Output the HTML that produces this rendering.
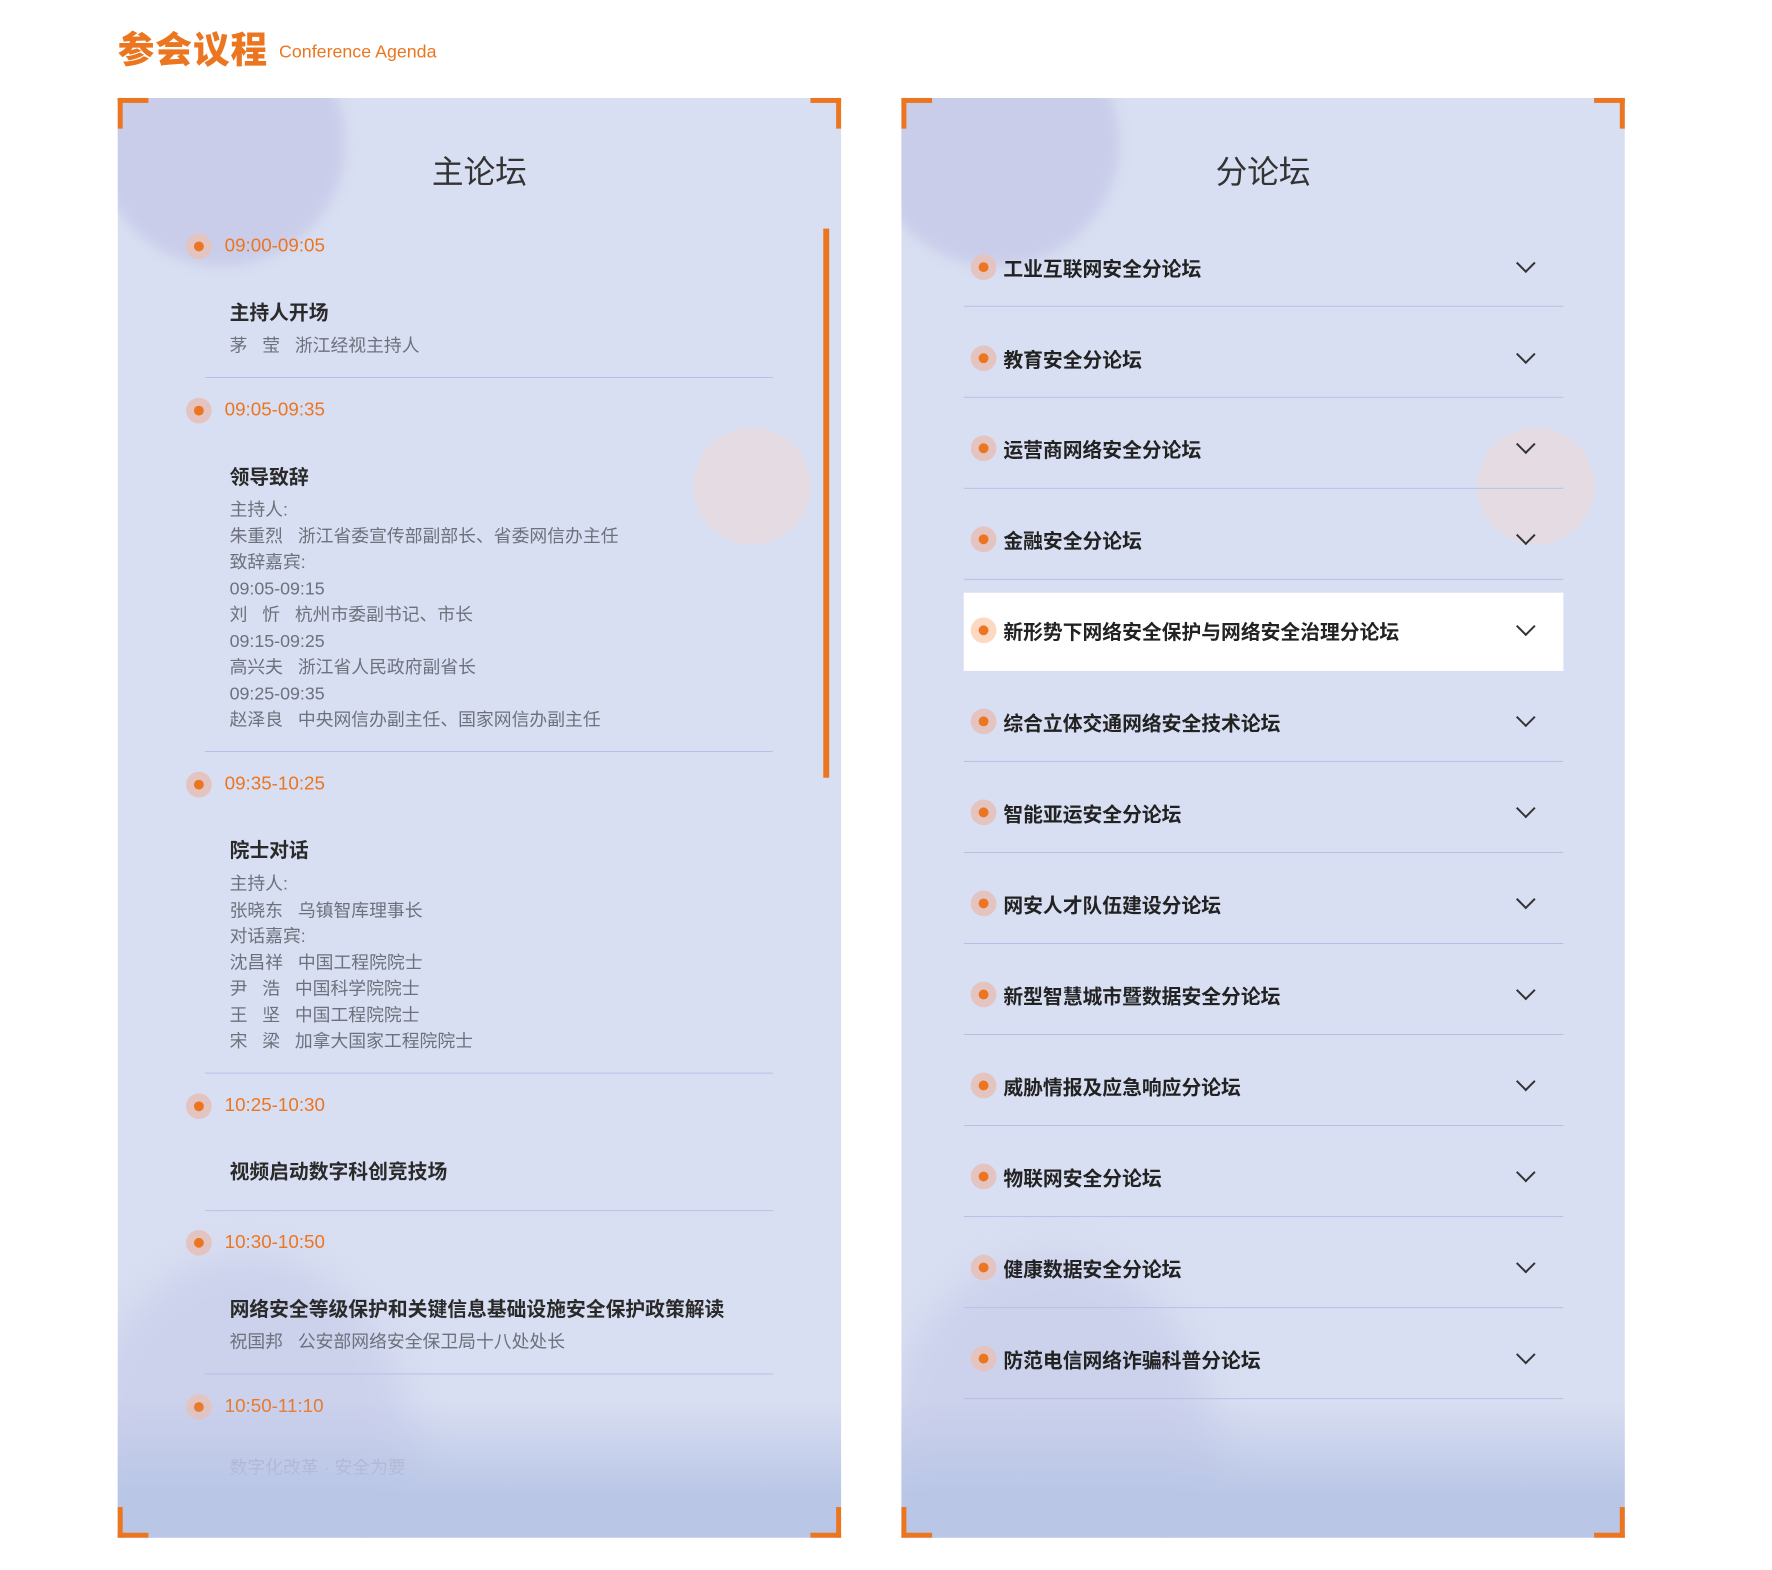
<!DOCTYPE html>
<html><head><meta charset="utf-8"><style>
*{margin:0;padding:0;box-sizing:border-box}
html{overflow:hidden;width:1772px;height:1570px}
body{width:1772px;height:1570px;background:#fff;position:relative;overflow:hidden;font-family:"Liberation Sans","Noto Sans CJK SC",sans-serif}
#w{position:absolute;left:0;top:0;width:1772px;height:1570px;transform:scale(0.9895);transform-origin:0 0}
.a{position:absolute;white-space:nowrap}
.h1{left:119px;top:20px;font-size:37px;font-weight:900;color:#ec7520;letter-spacing:1px}
.en{left:282px;top:42px;font-size:18px;color:#ec7520}
.panel{position:absolute;top:99px;width:731px;height:1455px;background:#d9dff2;overflow:hidden}
.c{position:absolute;width:31px;height:31px;border-color:#ec7520;border-style:solid;border-width:0}
.ttl{font-size:32px;color:#333;width:100%;text-align:center;top:50px}
.dot{position:absolute;width:26px;height:26px;border-radius:50%;background:#e4c4c0}
.dot::after{content:"";position:absolute;left:8px;top:8px;width:10px;height:10px;border-radius:50%;background:#ec7520}
.tm{font-size:19px;color:#ec7520}
.it{font-size:20px;font-weight:bold;color:#2a2a2a}
.ds{font-size:18px;color:#6d717c;line-height:26.5px}
.sep{position:absolute;height:1px;background:#b4c1e6}
.rt{font-size:20px;font-weight:bold;color:#222}
.chev{position:absolute;width:14px;height:14px;border-right:2px solid #333;border-bottom:2px solid #333;transform:rotate(45deg)}
</style></head><body><div id="w">
<div class="a h1">参会议程</div>
<div class="a en">Conference Agenda</div>

<div class="panel" style="left:119px">
 <div class="a" style="left:-20px;top:-80px;width:250px;height:250px;border-radius:50%;background:#c9cdea;filter:blur(6px)"></div>
 <div class="a" style="left:582px;top:333px;width:118px;height:118px;border-radius:50%;background:#e5dbe3"></div>
 <div class="a" style="left:-40px;top:1170px;width:340px;height:420px;border-radius:50%;background:#ccd1ec;filter:blur(20px)"></div>
 <div class="a ttl">主论坛</div>
 <div class="a" style="left:713px;top:132px;width:6px;height:555px;background:#ec7520"></div>
</div>
<div class="panel" style="left:911px">
 <div class="a" style="left:-30px;top:-80px;width:250px;height:250px;border-radius:50%;background:#c9cdea;filter:blur(6px)"></div>
 <div class="a" style="left:582px;top:333px;width:118px;height:118px;border-radius:50%;background:#e5dbe3"></div>
 <div class="a" style="left:-20px;top:1170px;width:340px;height:420px;border-radius:50%;background:#ccd1ec;filter:blur(20px)"></div>
 <div class="a ttl">分论坛</div>
</div>

<div class="dot" style="left:188px;top:236px"></div><div class="a tm" style="left:227px;top:238px">09:00-09:05</div>
<div class="a it" style="left:232px;top:300px">主持人开场</div>
<div class="a ds" style="left:232px;top:336px">茅&nbsp;&nbsp;&nbsp;莹&nbsp;&nbsp;&nbsp;浙江经视主持人</div>
<div class="sep" style="left:207px;top:381px;width:574px"></div>

<div class="dot" style="left:188px;top:402px"></div><div class="a tm" style="left:227px;top:404px">09:05-09:35</div>
<div class="a it" style="left:232px;top:466px">领导致辞</div>
<div class="a ds" style="left:232px;top:502px">主持人:<br>朱重烈&nbsp;&nbsp;&nbsp;浙江省委宣传部副部长、省委网信办主任<br>致辞嘉宾:<br>09:05-09:15<br>刘&nbsp;&nbsp;&nbsp;忻&nbsp;&nbsp;&nbsp;杭州市委副书记、市长<br>09:15-09:25<br>高兴夫&nbsp;&nbsp;&nbsp;浙江省人民政府副省长<br>09:25-09:35<br>赵泽良&nbsp;&nbsp;&nbsp;中央网信办副主任、国家网信办副主任</div>
<div class="sep" style="left:207px;top:759px;width:574px"></div>

<div class="dot" style="left:188px;top:780px"></div><div class="a tm" style="left:227px;top:782px">09:35-10:25</div>
<div class="a it" style="left:232px;top:843px">院士对话</div>
<div class="a ds" style="left:232px;top:880px">主持人:<br>张晓东&nbsp;&nbsp;&nbsp;乌镇智库理事长<br>对话嘉宾:<br>沈昌祥&nbsp;&nbsp;&nbsp;中国工程院院士<br>尹&nbsp;&nbsp;&nbsp;浩&nbsp;&nbsp;&nbsp;中国科学院院士<br>王&nbsp;&nbsp;&nbsp;坚&nbsp;&nbsp;&nbsp;中国工程院院士<br>宋&nbsp;&nbsp;&nbsp;梁&nbsp;&nbsp;&nbsp;加拿大国家工程院院士</div>
<div class="sep" style="left:207px;top:1084px;width:574px"></div>

<div class="dot" style="left:188px;top:1105px"></div><div class="a tm" style="left:227px;top:1107px">10:25-10:30</div>
<div class="a it" style="left:232px;top:1168px">视频启动数字科创竞技场</div>
<div class="sep" style="left:207px;top:1223px;width:574px"></div>

<div class="dot" style="left:188px;top:1243px"></div><div class="a tm" style="left:227px;top:1245px">10:30-10:50</div>
<div class="a it" style="left:232px;top:1307px">网络安全等级保护和关键信息基础设施安全保护政策解读</div>
<div class="a ds" style="left:232px;top:1343px">祝国邦&nbsp;&nbsp;&nbsp;公安部网络安全保卫局十八处处长</div>
<div class="sep" style="left:207px;top:1388px;width:574px"></div>

<div class="dot" style="left:188px;top:1409px"></div><div class="a tm" style="left:227px;top:1411px">10:50-11:10</div>
<div class="a ds" style="left:232px;top:1470px;opacity:.5">数字化改革 · 安全为要</div>

<div class="a" style="left:974px;top:599px;width:606px;height:79px;background:#fff"></div>
<div class="dot" style="left:981px;top:257px"></div><div class="a rt" style="left:1014px;top:256px">工业互联网安全分论坛</div><div class="chev" style="left:1535px;top:259px"></div><div class="sep" style="left:974px;top:309px;width:606px"></div>
<div class="dot" style="left:981px;top:349px"></div><div class="a rt" style="left:1014px;top:348px">教育安全分论坛</div><div class="chev" style="left:1535px;top:351px"></div><div class="sep" style="left:974px;top:401px;width:606px"></div>
<div class="dot" style="left:981px;top:440px"></div><div class="a rt" style="left:1014px;top:439px">运营商网络安全分论坛</div><div class="chev" style="left:1535px;top:442px"></div><div class="sep" style="left:974px;top:493px;width:606px"></div>
<div class="dot" style="left:981px;top:532px"></div><div class="a rt" style="left:1014px;top:531px">金融安全分论坛</div><div class="chev" style="left:1535px;top:534px"></div><div class="sep" style="left:974px;top:585px;width:606px"></div>
<div class="dot" style="left:981px;top:624px;background:#fbd9c2"></div><div class="a rt" style="left:1014px;top:623px">新形势下网络安全保护与网络安全治理分论坛</div><div class="chev" style="left:1535px;top:626px"></div>
<div class="dot" style="left:981px;top:716px"></div><div class="a rt" style="left:1014px;top:715px">综合立体交通网络安全技术论坛</div><div class="chev" style="left:1535px;top:718px"></div><div class="sep" style="left:974px;top:769px;width:606px"></div>
<div class="dot" style="left:981px;top:808px"></div><div class="a rt" style="left:1014px;top:807px">智能亚运安全分论坛</div><div class="chev" style="left:1535px;top:810px"></div><div class="sep" style="left:974px;top:861px;width:606px"></div>
<div class="dot" style="left:981px;top:900px"></div><div class="a rt" style="left:1014px;top:899px">网安人才队伍建设分论坛</div><div class="chev" style="left:1535px;top:902px"></div><div class="sep" style="left:974px;top:953px;width:606px"></div>
<div class="dot" style="left:981px;top:992px"></div><div class="a rt" style="left:1014px;top:991px">新型智慧城市暨数据安全分论坛</div><div class="chev" style="left:1535px;top:994px"></div><div class="sep" style="left:974px;top:1045px;width:606px"></div>
<div class="dot" style="left:981px;top:1084px"></div><div class="a rt" style="left:1014px;top:1083px">威胁情报及应急响应分论坛</div><div class="chev" style="left:1535px;top:1086px"></div><div class="sep" style="left:974px;top:1137px;width:606px"></div>
<div class="dot" style="left:981px;top:1176px"></div><div class="a rt" style="left:1014px;top:1175px">物联网安全分论坛</div><div class="chev" style="left:1535px;top:1178px"></div><div class="sep" style="left:974px;top:1229px;width:606px"></div>
<div class="dot" style="left:981px;top:1268px"></div><div class="a rt" style="left:1014px;top:1267px">健康数据安全分论坛</div><div class="chev" style="left:1535px;top:1270px"></div><div class="sep" style="left:974px;top:1321px;width:606px"></div>
<div class="dot" style="left:981px;top:1360px"></div><div class="a rt" style="left:1014px;top:1359px">防范电信网络诈骗科普分论坛</div><div class="chev" style="left:1535px;top:1362px"></div><div class="sep" style="left:974px;top:1413px;width:606px"></div>

<div class="a" style="left:119px;top:1414px;width:731px;height:140px;background:linear-gradient(rgba(217,223,242,0),#b9c6e6 70%,#b9c6e6)"></div>
<div class="a" style="left:911px;top:1414px;width:731px;height:140px;background:linear-gradient(rgba(217,223,242,0),#b9c6e6 70%,#b9c6e6)"></div>

<div class="c" style="left:119px;top:99px;border-top-width:5px;border-left-width:5px"></div>
<div class="c" style="left:819px;top:99px;border-top-width:5px;border-right-width:5px"></div>
<div class="c" style="left:119px;top:1523px;border-bottom-width:5px;border-left-width:5px"></div>
<div class="c" style="left:819px;top:1523px;border-bottom-width:5px;border-right-width:5px"></div>
<div class="c" style="left:911px;top:99px;border-top-width:5px;border-left-width:5px"></div>
<div class="c" style="left:1611px;top:99px;border-top-width:5px;border-right-width:5px"></div>
<div class="c" style="left:911px;top:1523px;border-bottom-width:5px;border-left-width:5px"></div>
<div class="c" style="left:1611px;top:1523px;border-bottom-width:5px;border-right-width:5px"></div>
</div></body></html>
